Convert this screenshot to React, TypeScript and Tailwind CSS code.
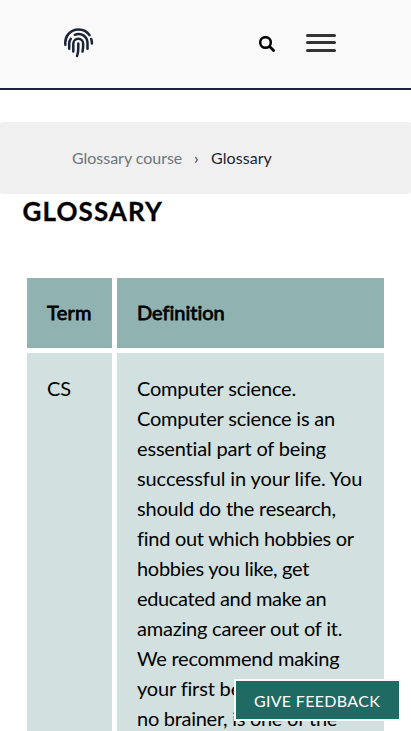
import React from "react";

const definition = [
  { text: "Computer science.", tracking: "tracking-[-0.2px]" },
  { text: "Computer science is an", tracking: "tracking-[-0.2px]" },
  { text: "essential part of being", tracking: "tracking-[-0.17px]" },
  { text: "successful in your life. You", tracking: "tracking-[-0.1px]" },
  { text: "should do the research,", tracking: "tracking-[-0.21px]" },
  { text: "find out which hobbies or", tracking: "tracking-[-0.28px]" },
  { text: "hobbies you like, get", tracking: "tracking-[-0.3px]" },
  { text: "educated and make an", tracking: "tracking-[-0.36px]" },
  { text: "amazing career out of it.", tracking: "tracking-[-0.22px]" },
  { text: "We recommend making", tracking: "tracking-[-0.26px]" },
  { text: "your first be a", tracking: "tracking-[-0.17px]" },
  { text: "no brainer, is one of the", tracking: "tracking-[-0.28px]" },
];

function Fingerprint() {
  return (
    <svg width="30" height="30" viewBox="0 0 30 30" fill="none" stroke="#1b2436" strokeWidth="2.5" strokeLinecap="round">
      <path d="M1.4 16.8C.2 8 6.6 1.4 14.5 1.4c4.8 0 8.7 2.2 11 5.7" />
      <path d="M27.2 11q.7 1.7.7 4.6" />
      <path d="M5.2 20.8v-5c0-1.9.5-3.6 1.6-5" />
      <path d="M10.8 6.8c6.1-2.7 12.7 1.3 12.7 8.4v5.6" />
      <path d="M9.3 23.5v-7.7c0-6.6 9.9-6.6 9.9 0 0 3-.1 5.5-.7 7.8" />
      <path d="M14.3 15.6v4.6c0 3-.4 5.2-1.2 7.8" />
    </svg>
  );
}

function Header() {
  return (
    <header className="flex h-[90px] shrink-0 border-b-2 border-[#1b2436] bg-[#f9f9f9] pl-16 pt-7">
      <Fingerprint />
      <button aria-label="Search" className="ml-[165px] mt-2 h-4 w-4">
        <svg width="16" height="16" viewBox="0 0 16 16" fill="none" stroke="black" strokeWidth="2.5" strokeLinecap="round">
          <circle cx="6.5" cy="6.5" r="5.3" />
          <path d="m10.8 10.8 3.8 3.8" strokeWidth="2.8" />
        </svg>
      </button>
      <button aria-label="Menu" className="ml-[31px] mt-1.5 flex h-[18px] w-[30px] flex-col">
        <span className="h-[3px] w-full rounded-full bg-[#333]" />
        <span className="mt-1 h-[3px] w-full rounded-full bg-[#333]" />
        <span className="mt-[5px] h-[3px] w-full rounded-full bg-[#333]" />
      </button>
    </header>
  );
}

export default function App() {
  return (
    <div className="relative flex h-[731px] w-full flex-col overflow-hidden bg-white font-['Lato',sans-serif] text-black">
      <Header />
      <nav className="mt-8 flex h-[72px] shrink-0 items-center rounded-[3px] bg-[#f0f0f0] pl-[72px] text-base">
        <span className="w-[110px] whitespace-nowrap tracking-[-0.03px] text-[#6c757d]">Glossary course</span>
        <span className="ml-3 w-[5px] text-[#333]">›</span>
        <span className="ml-3 tracking-[0.07px] text-[#1b2436]">Glossary</span>
      </nav>
      <h1 className="ml-[22.5px] mt-0.5 h-[31px] shrink-0 text-[26px] font-bold leading-[30px] tracking-[1.1px] [-webkit-text-stroke:0.3px_black]">GLOSSARY</h1>
      <div className="ml-[27px] mt-[51px] grid shrink-0 grid-cols-[85px_267px] gap-[5px] text-xl leading-[30px]">
        <div className="bg-[#90b3b1] px-5 pb-[21px] pt-[19px] tracking-[0.3px] [-webkit-text-stroke:0.8px_black]">Term</div>
        <div className="bg-[#90b3b1] px-5 pb-[21px] pt-[19px] [-webkit-text-stroke:0.8px_black] [font-variant-ligatures:none]">Definition</div>
        <div className="bg-[#d2e0df] p-5">CS</div>
        <div className="bg-[#d2e0df] p-5">
          {definition.map(({ text, tracking }) => (
            <div key={text} className={`whitespace-nowrap ${tracking}`}>{text}</div>
          ))}
        </div>
      </div>
      <button className="absolute left-[234px] top-[679px] h-[42px] w-[167px] whitespace-nowrap border-2 border-[#f8f9fa] bg-[#206a64] pr-px pt-0.5 text-base tracking-[0.32px] text-white">
        GIVE FEEDBACK
      </button>
    </div>
  );
}
